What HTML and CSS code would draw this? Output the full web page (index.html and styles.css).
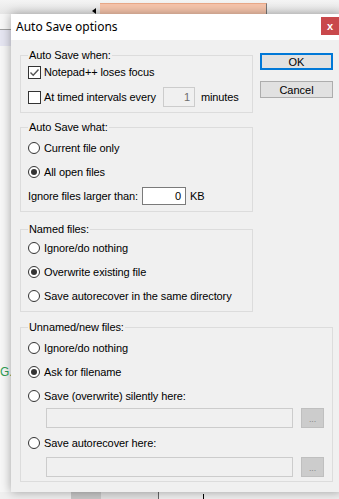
FILE: index.html
```html
<!DOCTYPE html>
<html lang="en">

<head>
    <meta charset="UTF-8">
    <meta name="viewport" content="width=device-width, initial-scale=1.0">
    <title>Auto Save options</title>
    <link rel="stylesheet" href="styles.css">
</head>

<body>
    <!-- Editor window behind the dialog -->
    <div class="desk">
        <div class="desk-top">
            <span class="desk-arrow"></span>
            <div class="desk-tab"></div>
        </div>
        <div class="desk-side">
            <div class="desk-band"></div>
            <span class="desk-g">G.</span>
        </div>
        <div class="desk-bottom">
            <span class="desk-block"></span>
            <span class="desk-block light"></span>
            <span class="desk-mark"></span>
        </div>
    </div>

    <div class="dialog">
        <div class="titlebar">
            <span class="title">Auto Save options</span>
            <button class="close">x</button>
        </div>

        <div class="dlg-body">
            <div class="top">
                <div class="groups">
                    <fieldset class="group g-when">
                        <legend>Auto Save when:</legend>
                        <div class="row">
                            <span class="check">
                                <svg viewBox="0 0 11 11" width="11" height="11">
                                    <path d="M1.5 5.5 L4.2 8.2 L9.5 2.5" fill="none" stroke="#555" stroke-width="1.4" />
                                </svg>
                            </span>
                            <span>Notepad++ loses focus</span>
                        </div>
                        <div class="row">
                            <span class="check"></span>
                            <span>At timed intervals every</span>
                            <span class="num num-every disabled">1</span>
                            <span>minutes</span>
                        </div>
                    </fieldset>

                    <fieldset class="group g-what">
                        <legend>Auto Save what:</legend>
                        <div class="row"><span class="radio"></span>Current file only</div>
                        <div class="row"><span class="radio on"></span>All open files</div>
                        <div class="row row-size">
                            <span>Ignore files larger than:</span>
                            <span class="num num-size">0</span>
                            <span>KB</span>
                        </div>
                    </fieldset>

                    <fieldset class="group g-named">
                        <legend>Named files:</legend>
                        <div class="row"><span class="radio"></span>Ignore/do nothing</div>
                        <div class="row"><span class="radio on"></span>Overwrite existing file</div>
                        <div class="row"><span class="radio"></span>Save autorecover in the same directory</div>
                    </fieldset>
                </div>

                <div class="buttons">
                    <button class="btn btn-default">OK</button>
                    <button class="btn">Cancel</button>
                </div>
            </div>

            <fieldset class="group g-unnamed">
                <legend>Unnamed/new files:</legend>
                <div class="row"><span class="radio"></span>Ignore/do nothing</div>
                <div class="row"><span class="radio on"></span>Ask for filename</div>
                <div class="row"><span class="radio"></span>Save (overwrite) silently here:</div>
                <div class="path-row">
                    <span class="path"></span>
                    <span class="browse">...</span>
                </div>
                <div class="row"><span class="radio"></span>Save autorecover here:</div>
                <div class="path-row path-last">
                    <span class="path"></span>
                    <span class="browse">...</span>
                </div>
            </fieldset>
        </div>
    </div>
</body>

</html>
```

FILE: styles.css
```css
body {
    margin: 0;
    width: 339px;
    height: 499px;
    overflow: hidden;
    position: relative;
    background-color: #f7f7f7;
    font-family: "Liberation Sans", Arial, sans-serif;
    font-size: 11px;
    letter-spacing: -0.1px;
    color: #000;
}

/* background window */
.desk-top {
    height: 14px;
    background: linear-gradient(#f4f4f4, #e6e6e6);
    position: relative;
}

.desk-arrow {
    position: absolute;
    left: 92px;
    top: 8px;
    border-right: 4px solid #000;
    border-top: 3px solid transparent;
    border-bottom: 3px solid transparent;
}

.desk-tab {
    position: absolute;
    left: 100px;
    top: 3px;
    width: 166px;
    height: 11px;
    background-color: #f6c4ab;
    border-top: 1px solid #e8a888;
    border-right: 1px solid #777;
}

.desk-side {
    position: absolute;
    left: 0;
    top: 14px;
    width: 11px;
    height: 478px;
}

.desk-band {
    margin-top: 15px;
    height: 16px;
    border-top: 1px solid #a0a0a0;
    background-color: #e6e6f2;
}

.desk-g {
    position: absolute;
    left: 0;
    top: 351px;
    color: #2e9e52;
    font-size: 12px;
}

.desk-bottom {
    position: absolute;
    left: 0;
    top: 492px;
    width: 339px;
    height: 7px;
    background-color: #f0f0f0;
}

.desk-block {
    position: absolute;
    left: 71px;
    top: 0;
    width: 30px;
    height: 7px;
    background-color: #c8c8c8;
}

.desk-block.light {
    left: 101px;
    width: 57px;
    background-color: #e2e2e2;
    border-right: 1px solid #666;
}

.desk-mark {
    position: absolute;
    left: 203px;
    top: 2px;
    width: 1px;
    height: 5px;
    background-color: #000;
}

/* dialog window */
.dialog {
    position: absolute;
    left: 11px;
    top: 14px;
    width: 331px;
    background-color: #f0f0f0;
    box-shadow: 0 0 10px rgba(0, 0, 0, 0.35);
}

.titlebar {
    height: 26px;
    background-color: #fff;
    position: relative;
}

.title {
    position: absolute;
    left: 5px;
    top: 6px;
    font-family: "Noto Sans", "Liberation Sans", sans-serif;
    font-size: 12px;
    letter-spacing: 0;
    line-height: 14px;
}

.close {
    position: absolute;
    right: 3px;
    top: 3px;
    width: 18px;
    height: 18px;
    padding: 0;
    border: none;
    background-color: #c9484b;
    color: #fff;
    font-family: "Liberation Sans", sans-serif;
    font-size: 11px;
    font-weight: bold;
    line-height: 16px;
}

.dlg-body {
    padding: 8px 9px 10px 9px;
}

.top {
    display: flex;
    gap: 7px;
}

.groups {
    width: 233px;
    display: flex;
    flex-direction: column;
}

.buttons {
    display: flex;
    flex-direction: column;
    gap: 11px;
    padding-top: 5px;
}

.btn {
    width: 73px;
    height: 17px;
    padding: 0;
    font-family: "Liberation Sans", Arial, sans-serif;
    font-size: 11px;
    color: #000;
    background-color: #e1e1e1;
    border: 1px solid #adadad;
}

.btn-default {
    border: 2px solid #0078d7;
}

/* group boxes */
.group {
    margin: 0;
    padding: 0 7px 5px 7px;
    min-width: 0;
    border: 1px solid #dcdcdc;
    display: flex;
    flex-direction: column;
}

.group legend {
    padding: 0 1px;
    height: 14px;
    line-height: 14px;
}

.g-when {
    gap: 5px;
}

.g-what {
    margin-top: 7px;
    padding-top: 4px;
    padding-bottom: 6px;
    gap: 4px;
}

.g-named {
    margin-top: 10px;
    padding-top: 2px;
    gap: 4px;
}

.g-unnamed {
    margin-top: 8px;
    padding: 4px 8px 4px 7px;
    gap: 4px;
}

.row {
    height: 20px;
    display: flex;
    align-items: center;
    white-space: nowrap;
}

.row-size {
    height: 19px;
}

.check {
    width: 11px;
    height: 11px;
    border: 1px solid #333;
    background-color: #fff;
    margin-right: 3px;
    display: flex;
}

.radio {
    width: 10px;
    height: 10px;
    border: 1px solid #333;
    border-radius: 50%;
    background-color: #fff;
    margin-right: 4px;
    position: relative;
}

.radio.on::after {
    content: "";
    position: absolute;
    left: 2px;
    top: 2px;
    width: 6px;
    height: 6px;
    border-radius: 50%;
    background-color: #333;
}

.num {
    height: 18px;
    line-height: 16px;
    text-align: right;
    padding-right: 4px;
    box-sizing: border-box;
    border: 1px solid #7a7a7a;
    background-color: #fff;
}

.num.disabled {
    border-color: #ccc;
    background-color: #f0f0f0;
    color: #6d6d6d;
}

.num-every {
    width: 32px;
    height: 20px;
    line-height: 18px;
    margin: 0 6px 0 7px;
}

.num-size {
    width: 44px;
    margin: 0 4px 0 4px;
}

.path-row {
    display: flex;
    gap: 8px;
    padding-left: 18px;
    margin-top: -2px;
}

.path-row + .row {
    margin-top: 1px;
}

.path-last {
    margin-top: 0;
}

.path {
    width: 249px;
    height: 20px;
    box-sizing: border-box;
    border: 1px solid #ccc;
    background-color: #f0f0f0;
}

.browse {
    width: 23px;
    height: 20px;
    box-sizing: border-box;
    border: 1px solid #bfbfbf;
    background-color: #cccccc;
    color: #8a8a8a;
    font-size: 9px;
    text-align: center;
    line-height: 20px;
}
```
